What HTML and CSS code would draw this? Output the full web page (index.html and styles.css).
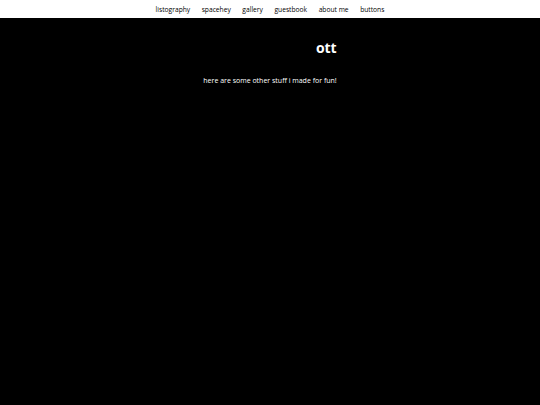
FILE: index.html
```html
<!DOCTYPE html>
<html>
<head>
<meta charset="utf-8">
<link rel="stylesheet" href="styles.css">
</head>
<body>
<nav class="nav">
  <a href="#">listography</a>
  <a href="#">spacehey</a>
  <a href="#">gallery</a>
  <a href="#">guestbook</a>
  <a href="#">about me</a>
  <a href="#">buttons</a>
</nav>
<main class="intro">
  <h1 class="title">ott</h1>
  <p class="lead">here are some other stuff i made for fun!</p>
</main>
</body>
</html>
```

FILE: styles.css
```css
html, body {
  margin: 0;
  padding: 0;
  background: #000;
  height: 100%;
}
body {
  font-family: "Comic Sans MS", "Open Sans", sans-serif;
  color: #fff;
}
.nav {
  background: #fff;
  height: 18px;
  display: flex;
  justify-content: center;
  align-items: center;
  gap: 11.5px;
}
.nav a {
  color: #000;
  text-decoration: none;
  font-size: 6.7px;
}
.intro {
  width: fit-content;
  margin: 0 auto;
  padding-top: 20px;
}
.title {
  margin: 0;
  text-align: right;
  font-size: 14px;
  font-weight: bold;
  line-height: 20px;
}
.lead {
  margin: 18px 0 0;
  font-size: 7px;
}
```
